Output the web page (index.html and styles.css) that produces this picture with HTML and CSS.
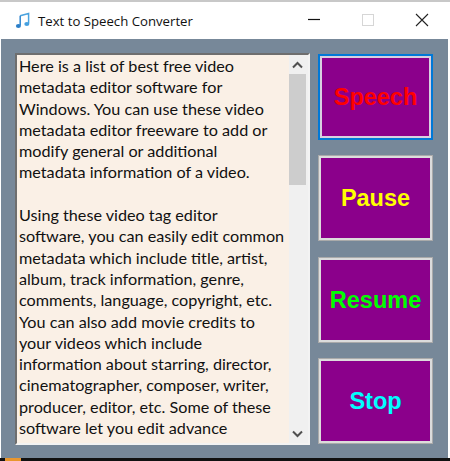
FILE: index.html
```html
<!DOCTYPE html>
<html lang="en">
<head>
<meta charset="utf-8">
<title>Text to Speech Converter</title>
<link rel="stylesheet" href="styles.css">
</head>
<body>
<div class="window">
  <header class="titlebar">
    <svg class="app-icon" viewBox="0 0 16 16" width="16" height="17" aria-hidden="true">
      <path d="M5.2 3.2 13.6 1v10" fill="none" stroke="#4aa3df" stroke-width="1.5"/>
      <path d="M5.2 3.2V13" fill="none" stroke="#2f86cf" stroke-width="1.5"/>
      <ellipse cx="3.4" cy="13.4" rx="2.5" ry="2" fill="#2b7fc9"/>
      <ellipse cx="11.8" cy="11.6" rx="2.5" ry="2" fill="#45a0e0"/>
    </svg>
    <span class="title">Text to Speech Converter</span>
    <div class="controls">
      <svg class="ctl" viewBox="0 0 46 20" width="46" height="20" aria-hidden="true"><path d="M17 9.500h12" stroke="#111" stroke-width="1.200"/></svg>
      <svg class="ctl" viewBox="0 0 46 20" width="46" height="20" aria-hidden="true"><rect x="17.500" y="4.500" width="11" height="11" fill="none" stroke="#d6d6d6"/></svg>
      <svg class="ctl" viewBox="0 0 46 20" width="46" height="20" aria-hidden="true"><path d="M17 4l12 12M29 4 17 16" stroke="#222" stroke-width="1.100"/></svg>
    </div>
  </header>
  <main class="client">
    <section class="textbox">
      <p class="text">Here is a list of best free video<br>metadata editor software for<br>Windows. You can use these video<br>metadata editor freeware to add or<br>modify general or additional<br>metadata information of a video.<br><br>Using these video tag editor<br>software, you can easily edit common<br>metadata which include title, artist,<br>album, track information, genre,<br>comments, language, copyright, etc.<br>You can also add movie credits to<br>your videos which include<br>information about starring, director,<br>cinematographer, composer, writer,<br>producer, editor, etc. Some of these<br>software let you edit advance</p>
      <div class="scrollbar">
        <svg class="arrow" viewBox="0 0 17 17" width="17" height="17" aria-hidden="true"><path d="M4 11.500 8.500 7l4.500 4.500" fill="none" stroke="#505050" stroke-width="2"/></svg>
        <div class="track"><div class="thumb"></div></div>
        <svg class="arrow" viewBox="0 0 17 17" width="17" height="17" aria-hidden="true"><path d="M4 6.500 8.500 11 13 6.500" fill="none" stroke="#505050" stroke-width="2"/></svg>
      </div>
    </section>
    <nav class="buttons">
      <button class="btn focus speech">Speech</button>
      <button class="btn pause">Pause</button>
      <button class="btn resume">Resume</button>
      <button class="btn stop">Stop</button>
    </nav>
  </main>
  <footer class="bottom"><span class="taskbar-accent"></span></footer>
</div>
</body>
</html>
```
FILE: styles.css
```css
* { box-sizing: border-box; }
html, body { margin: 0; padding: 0; }
body { width: 450px; height: 461px; overflow: hidden; background: #fff; }
.window { width: 450px; height: 461px; display: flex; flex-direction: column; border-top: 2px solid #c8c8c8; }
.titlebar { height: 37px; flex: none; display: flex; align-items: center; padding-left: 15px; background: #fff; }
.app-icon { flex: none; margin-right: 7px; }
.title { font: 13.200px/16px "Open Sans", "Noto Sans", sans-serif; color: #111; flex: 1; }
.controls { display: flex; gap: 8px; padding-right: 5px; margin-bottom: 2px; }
.ctl { display: block; }
.client { flex: 1; min-height: 0; margin: 0 2px 0 1px; padding: 14px 15px 13px 14px; display: flex; gap: 8px; background: #778899; }
.textbox { width: 295px; height: 392px; flex: none; display: flex; background: #faf0e6; border: 2px solid; border-color: #6e6e6e #f3f3f3 #f3f3f3 #6e6e6e; }
.text { flex: 1; margin: 0; padding: 0 0 0 2px; overflow: hidden; font: 16.200px/21.300px "Lato", "Open Sans", sans-serif; color: #111; white-space: nowrap; }
.scrollbar { width: 19px; flex: none; padding-right: 2px; display: flex; flex-direction: column; align-items: center; background: #f0f0f0; }
.arrow { flex: none; margin: 1px 0; }
.track { flex: 1; width: 100%; }
.thumb { width: 100%; height: 111px; background: #cdcdcd; }
.buttons { flex: 1; padding: 1px 0; display: flex; flex-direction: column; justify-content: space-between; }
.btn { height: 86px; width: 100%; padding: 1px 0 0; background: #8b008b; border: 3px solid #dcdcdc; outline: 1px solid #aaa; outline-offset: -1px; font: bold 23.500px Arial, "Liberation Sans", sans-serif; }
.focus { border-color: #d8d0e0; border-width: 4px; outline: 2px solid #0078d7; outline-offset: -2px; }
.speech { color: #f00; }
.pause { color: #ff0; }
.resume { color: #0f0; }
.stop { color: #0ff; }
.bottom { height: 3px; flex: none; background: #111; }
.taskbar-accent { display: block; width: 16px; height: 100%; margin-left: 5px; background: #e8962e; }
```
